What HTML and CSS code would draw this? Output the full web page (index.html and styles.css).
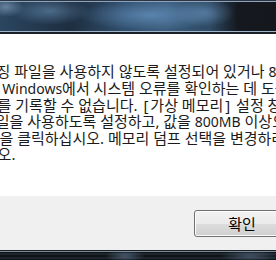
FILE: index.html
```html
<!DOCTYPE html>
<html lang="ko">
<head>
    <meta charset="UTF-8">
    <title>시스템 속성</title>
    <link rel="stylesheet" href="styles.css">
</head>
<body>
    <div class="window">
        <div class="glass-top"></div>

        <div class="message">
            <div class="line line-1">페이징 파일을 사용하지 않도록 설정되어 있거나 <span class="lat">800MB</span>보다</div>
            <div class="line line-2">작으면 <span class="lat">Windows</span>에서 시스템 오류를 확인하는 데 도움이 되는</div>
            <div class="line line-3">정보를 기록할 수 없습니다. <span class="br">[</span>가상 메모리<span class="br">]</span> 설정 창에서</div>
            <div class="line line-4">파일을 사용하도록 설정하고, 값을 <span class="lat">800MB</span> 이상으로</div>
            <div class="line line-5"><span class="br">[</span>변경<span class="br">]</span>을 클릭하십시오. 메모리 덤프 선택을 변경하려면</div>
            <div class="line line-6">십시오.</div>
        </div>

        <div class="footer">
            <button class="ok-btn">확인</button>
        </div>

        <div class="glass-bottom"></div>
    </div>
</body>
</html>
```

FILE: styles.css
```css
* {
    margin: 0;
    padding: 0;
    box-sizing: border-box;
}

body {
    width: 276px;
    height: 260px;
    overflow: hidden;
    background: #10151c;
    font-family: "Noto Sans", "Noto Sans CJK KR", sans-serif;
    color: #1b1b1b;
}

.window {
    display: flex;
    flex-direction: column;
    height: 260px;
}

/* aero glass strip above the dialog */
.glass-top {
    height: 34px;
    border-top: 1px solid #2a3442;
    border-bottom: 2px solid #1a2028;
    box-shadow: inset 0 1px 0 #8ea3b9, inset 0 -1px 0 #9fb3c7;
    background:
        radial-gradient(ellipse 18px 10px at 6px 6px, rgba(140, 170, 200, 0.6), transparent),
        radial-gradient(ellipse 40px 14px at 50px 10px, rgba(110, 150, 190, 0.55), transparent),
        radial-gradient(ellipse 70px 16px at 150px 14px, rgba(105, 150, 195, 0.7), transparent),
        radial-gradient(ellipse 30px 14px at 205px 12px, rgba(100, 140, 180, 0.6), transparent),
        linear-gradient(to right, #2b4660 0%, #1d2e40 25%, #2f4d6b 45%, #3a5c7c 60%, #2e4a64 76%, #15191f 86%, #14181d 100%);
}

.message {
    height: 162px;
    background: #ffffff;
    padding-top: 29px;
    overflow: hidden;
    font-size: 15px;
    line-height: 16px;
}

.line {
    white-space: nowrap;
}

.lat {
    font-size: 14px;
}

.br {
    margin: 0 2px;
}

.line-1 { margin-left: -31px; }
.line-2 { margin-left: -43px; }
.line-3 { margin-left: -30px; }
.line-4 { margin-left: -18px; }
.line-5 { margin-left: -46px; }
.line-6 { margin-left: -30px; }

.footer {
    height: 54px;
    background: #f0f0f0;
    padding: 14px 0 0 194px;
    overflow: hidden;
}

.ok-btn {
    width: 96px;
    height: 27px;
    border: 1px solid #707070;
    border-radius: 3px;
    background: linear-gradient(to bottom, #f2f2f2 0%, #ebebeb 50%, #dddddd 51%, #cfcfcf 100%);
    box-shadow: inset 0 0 0 1px #fcfcfc;
    font-family: inherit;
    font-size: 15px;
    color: #000000;
}

.glass-bottom {
    height: 10px;
    border-top: 1px solid #1a1f26;
    box-shadow: inset 0 1px 0 #7d8a98;
    background:
        radial-gradient(ellipse 20px 6px at 125px 5px, rgba(120, 150, 180, 0.5), transparent),
        radial-gradient(ellipse 30px 6px at 250px 5px, rgba(110, 140, 170, 0.5), transparent),
        repeating-linear-gradient(to bottom, #0f1318 0px, #0f1318 2px, #2c3640 3px, #0f1318 4px);
}
```
